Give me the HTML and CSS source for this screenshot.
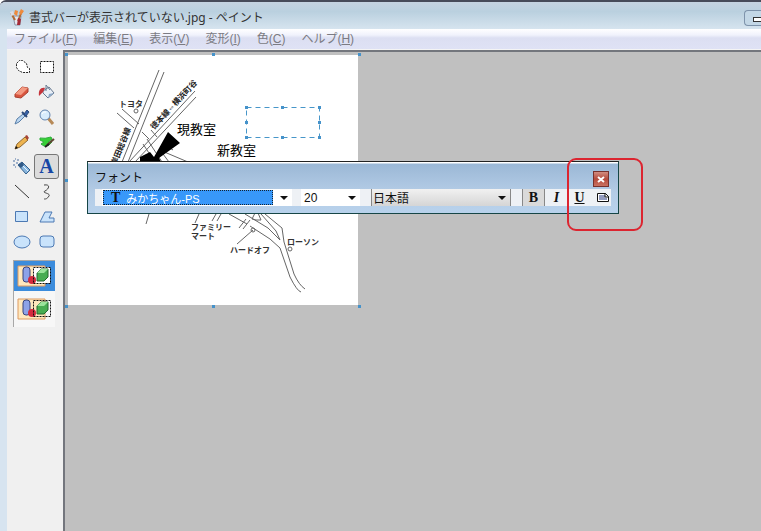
FILE: index.html
```html
<!DOCTYPE html>
<html lang="ja">
<head>
    <meta charset="UTF-8">
    <meta name="viewport" content="width=device-width, initial-scale=1.0">
    <title>書式バーが表示されていない.jpg - ペイント</title>
    <link rel="stylesheet" href="styles.css">
</head>
<body>
    <div class="window">
        <header class="titlebar">
            <svg class="app-icon" width="16" height="17" viewBox="0 0 16 17">
                <path d="M3 7h8l-1 9H5z" fill="#e4e8f0" stroke="#8b93a5"/>
                <path d="M1 4l4 7M12 2L8 12" stroke="#b06a35" stroke-width="2"/>
                <path d="M0 3l3-1 1 4-3 1z" fill="#d9dde5"/>
                <path d="M5 1l3 1-1 5-3-2zM11 0l3 2-3 4-2-2z" fill="#ee8a3c"/>
                <path d="M8 9l3 1-1 6H7z" fill="#a52c38"/>
            </svg>
            <h1>書式バーが表示されていない.jpg - ペイント</h1>
            <button class="minimize" aria-label="最小化"><span></span></button>
        </header>
        <nav class="menubar">
            <button>ファイル(<u>F</u>)</button>
            <button>編集(<u>E</u>)</button>
            <button>表示(<u>V</u>)</button>
            <button>変形(<u>I</u>)</button>
            <button>色(<u>C</u>)</button>
            <button>ヘルプ(<u>H</u>)</button>
        </nav>
        <div class="content">
            <aside class="toolbox">
                <div class="tools">
                    <button aria-label="自由選択"><svg width="18" height="18" viewBox="0 0 18 18"><path d="M3.500 5.500l3-3h3l4 3 1 4 2 1v4h-7l-4-2-2-3z" fill="#fff" stroke="#222" stroke-dasharray="2 1"/></svg></button>
                    <button aria-label="選択"><svg width="18" height="18" viewBox="0 0 18 18"><path d="M2.500 3.500h13v11h-13z" fill="#fff" stroke="#111" stroke-dasharray="2 1"/></svg></button>
                    <button aria-label="消しゴム"><svg width="18" height="18" viewBox="0 0 18 18"><path d="M2 11l7-7 6 1v4l-7 6-6-1z" fill="#d9553f" stroke="#a8402f"/><path d="M2 11l7-7 6 1-7 7z" fill="#f39a82"/></svg></button>
                    <button aria-label="塗りつぶし"><svg width="18" height="18" viewBox="0 0 18 18"><path d="M5 8l6-4 5 6-6 5-5-5z" fill="#e9eff7" stroke="#66788f"/><path d="M8 8V2l4 5" fill="none" stroke="#6b7d92"/><path d="M7 5C3 4 0 7 1 13l4-4z" fill="#c6343b"/><path d="M10 15l6-5-5 1z" fill="#8ba8c8"/></svg></button>
                    <button aria-label="色の選択"><svg width="18" height="18" viewBox="0 0 18 18"><path d="M2 16l2-5 6-5 2 2-6 6z" fill="#b9d5f0" stroke="#5a7fa8"/><path d="M9 4l5 5" stroke="#2c4a7a" stroke-width="2"/><path d="M11 6l3-4 2 2-3 4z" fill="#3862a8" stroke="#2c4a7a"/></svg></button>
                    <button aria-label="拡大と縮小"><svg width="18" height="18" viewBox="0 0 18 18"><path d="M10 10l5 6" stroke="#b78a58" stroke-width="3"/><circle cx="7" cy="7" r="5" fill="#d9ecfc" stroke="#6484ae"/><path d="M4 6q1-3 4-2" fill="none" stroke="#fff"/></svg></button>
                    <button aria-label="鉛筆"><svg width="18" height="18" viewBox="0 0 18 18"><path d="M2 16l2-5 8-7 3 3-8 7z" fill="#edb34f" stroke="#8f6933"/><path d="M2 16l1-3 2 2z" fill="#111"/><path d="M12 3l2-1 2 3-2 2z" fill="#a74436"/></svg></button>
                    <button aria-label="ブラシ"><svg width="18" height="18" viewBox="0 0 18 18"><path d="M2 5q5 1 11-1l1 2-4 3 4 0q-3 5-8 4l-3-2 3-2-4-2z" fill="#36cf36" stroke="#2fae3c"/><path d="M9 12l7-6" stroke="#5f4432" stroke-width="2"/><path d="M7 14l4-3" stroke="#222" stroke-width="2"/></svg></button>
                    <button aria-label="エアブラシ"><svg width="18" height="18" viewBox="0 0 18 18"><path d="M5 7l4-3 8 8-4 4z" fill="#8bb8df" stroke="#35618d"/><path d="M5 7l4-3 2 3-3 3z" fill="#315a87"/><path d="M0 3h2m1 2h2M0 7h2m2-5h2m-4-1h1M2 9h1" stroke="#4a6ea0"/><path d="M10 8l5 5" stroke="#e6f4ff"/></svg></button>
                    <button class="active letter" aria-label="テキスト">A</button>
                    <button aria-label="直線"><svg width="18" height="18" viewBox="0 0 18 18"><path d="M2 2l14 13" stroke="#333"/></svg></button>
                    <button aria-label="曲線"><svg width="18" height="18" viewBox="0 0 18 18"><path d="M6 2c7-1 5 4 1 6s6 2 4 5-3 3-5 3" fill="none" stroke="#444"/></svg></button>
                    <button aria-label="四角形"><svg width="18" height="18" viewBox="0 0 18 18"><path class="shape" d="M2.500 3.500h12v10h-12z"/></svg></button>
                    <button aria-label="多角形"><svg width="18" height="18" viewBox="0 0 18 18"><path class="shape" d="M2 14L7 4h7l-3 6h5v4z"/></svg></button>
                    <button aria-label="楕円"><svg width="18" height="18" viewBox="0 0 18 18"><ellipse class="shape" cx="9" cy="9" rx="8" ry="6"/></svg></button>
                    <button aria-label="角丸四角形"><svg width="18" height="18" viewBox="0 0 18 18"><rect class="shape" x="2" y="3" width="14" height="11" rx="3"/></svg></button>
                </div>
                <div class="options">
                    <button class="selected" aria-label="背景を透明にしない">
                        <svg width="36" height="24" viewBox="0 0 36 24"><path fill="#ffe8bd" stroke="#dd9a61" d="M1 2h27v20H1z"/><path fill="#fff" d="M16 3h17v16H16z"/><rect x="6" y="3" width="7" height="15" rx="3" fill="#8da2e8" stroke="#38447c"/><circle cx="15" cy="16" r="4" fill="#d42a3e"/><path d="M20 9l4-4h7v8l-4 4h-7z" fill="#48ad52" stroke="#25692e"/><path d="M20 9l4-4h7l-4 4z" fill="#9be49b"/><path fill="none" stroke="#111" stroke-dasharray="2 1" d="M16.500 3.500h17v16h-17z"/></svg>
                    </button>
                    <button aria-label="背景を透明にする">
                        <svg width="36" height="24" viewBox="0 0 36 24"><path fill="#ffe8bd" stroke="#dd9a61" d="M1 2h27v20H1z"/><rect x="6" y="3" width="7" height="15" rx="3" fill="#8da2e8" stroke="#38447c"/><circle cx="15" cy="16" r="4" fill="#d42a3e"/><path d="M20 9l4-4h7v8l-4 4h-7z" fill="#48ad52" stroke="#25692e"/><path d="M20 9l4-4h7l-4 4z" fill="#9be49b"/><path fill="none" stroke="#111" stroke-dasharray="2 1" d="M16.500 3.500h17v16h-17z"/></svg>
                    </button>
                </div>
            </aside>
            <main class="workspace">
                <!-- canvas with the map being edited -->
                <svg class="canvas" width="296" height="256" viewBox="0 0 296 256">
                    <path d="M3 3h290v250H3z" fill="#fff"/>
                    <g class="roads">
                        <path d="M94 18L57 110M99 20L63 110M64 110L130 39M70 110L131 45M52 61L69 76M57 57L74 72M77 80L84 87M82 87L97 110M78 92L86 104M86 78L92 85M98 102L104 110M97 99L123 110M102 94L108 98"/>
                        <path d="M84 162l-3 10M134 162l-4 9M151 162l-4 7M156 162l-4 7M164 162L182 172M185 174L205 187L215 196L225 225Q232 239 236 240M180 162L203 176L215 188L211 179L196 162M200 162L217 176L219 190L229 222Q234 233 240 237M174 176l7-9M178 177l7-9M188 178L172 192"/>
                        <path d="M166 161l3-5 4 5zm21 6l3-6 3 0 3 7-5 0z"/>
                        <circle cx="71" cy="59" r="2"/>
                        <circle cx="188" cy="178" r="2"/>
                        <circle cx="225" cy="197" r="2"/>
                    </g>
                    <path d="M103 80l12 11-21 15 2 4H75v-5l10-5 4 5z"/>
                    <g class="map-text">
                        <text x="54" y="55">トヨタ</text>
                        <text x="126" y="178">ファミリー</text>
                        <text x="126" y="187">マート</text>
                        <text x="165" y="201">ハードオフ</text>
                        <text x="222" y="193">ローソン</text>
                        <text class="street" transform="translate(89 78) rotate(-47)">徳本線⇔横浜町谷</text>
                        <text class="street" transform="translate(51 114) rotate(-68)">岸田総谷線</text>
                    </g>
                    <text class="room" x="112" y="82">現教室</text>
                    <text class="room" x="152" y="103">新教室</text>
                    <path class="selection" d="M181.500 55.500h73v30h-73z"/>
                    <path class="handle" d="M180 54h3v3h-3zm36 0h3v3h-3zm37 0h3v3h-3zM180 69h3v3h-3zm73 0h3v3h-3zM180 84h3v3h-3zm36 0h3v3h-3zm37 0h3v3h-3z"/>
                    <path class="handle" d="M0 1h3v3H0zm147 0h3v3h-3zm146 0h3v3h-3zM0 127h3v3H0zM0 253h3v3H0zm147 0h3v3h-3zm146 0h3v3h-3z"/>
                </svg>
                <section class="font-bar" aria-label="フォント">
                    <div class="font-title">
                        <h2>フォント</h2>
                        <button class="close" aria-label="閉じる"><svg width="8" height="7" viewBox="0 0 8 7"><path d="M1 1l6 5M7 1L1 6" stroke="#fff" stroke-width="2"/></svg></button>
                    </div>
                    <div class="font-tools">
                        <button class="combo font-name"><span class="name"><b>T</b>みかちゃん-PS</span><i class="arrow"></i></button>
                        <button class="combo font-size">20<i class="arrow"></i></button>
                        <button class="combo font-lang">日本語<i class="arrow"></i></button>
                        <div class="styles">
                            <button class="pressed"><b>B</b></button>
                            <button><em>I</em></button>
                            <button><u>U</u></button>
                            <button aria-label="縦書き"><svg width="14" height="11" viewBox="0 0 14 11"><path d="M1.500 1.500h8l3 3v5h-11z" fill="#fff" stroke="#111"/><path d="M4 3v5M6 3v5M8 3v5M10 6v2" stroke="#26367e"/><path d="M9 1v4h4" fill="none" stroke="#111"/></svg></button>
                        </div>
                    </div>
                </section>
                <div class="marker"></div>
            </main>
        </div>
    </div>
</body>
</html>
```

FILE: styles.css
```css
* {
    box-sizing: border-box;
}
body {
    margin: 0;
    font-family: "Liberation Sans", "Noto Sans CJK JP", sans-serif;
    font-size: 12px;
    color: #111;
}
button {
    padding: 0;
    border: none;
    background: none;
    font: inherit;
    color: inherit;
}
h1, h2 {
    margin: 0;
    font-weight: normal;
}
.window {
    display: flex;
    flex-direction: column;
    min-height: 100vh;
    border-top: 2px solid #474a59;
    border-radius: 6px 0 0 0;
    background: #d7e4f0;
    overflow: hidden;
}
.titlebar {
    display: flex;
    align-items: center;
    height: 27px;
    padding: 4px 0 0 10px;
    background: linear-gradient(#c5d2e0, #bad0df 35%, #d6e4ef);
}
.titlebar h1 {
    flex: 1;
    margin-left: 3px;
    font-family: "Noto Sans", "Noto Sans CJK JP", sans-serif;
    font-size: 12px;
    line-height: 20px;
    color: #333;
}
.minimize {
    width: 17px;
    height: 16px;
    padding: 0 0 0 8px;
    border: 1px solid #7e93ab;
    border-right: none;
    border-radius: 4px 0 0 4px;
    background: #c3d7e6;
}
.minimize span {
    display: block;
    width: 9px;
    height: 5px;
    margin-top: 4px;
    border: 1px solid #333;
    border-right: none;
    background: #fff;
}
.menubar {
    display: flex;
    gap: 16px;
    height: 20px;
    margin-left: 7px;
    padding-left: 7px;
    background: linear-gradient(#fff, #f0f2fc 30%, #dcdff2 45%, #dfe2f5);
    color: #7b7b83;
    line-height: 20px;
    white-space: nowrap;
}
.content {
    display: flex;
    flex: 1;
    margin-left: 7px;
    border-top: 1px solid #f4f4f4;
}
.toolbox {
    flex: none;
    width: 56px;
    padding: 4px 2px 0 2px;
    background: #f0f0f0;
}
.tools {
    display: grid;
    grid-template-columns: 25px 25px;
    grid-auto-rows: 25px;
}
.tools button {
    display: flex;
    align-items: center;
    justify-content: center;
}
.tools .active {
    border: 1px solid #777;
    border-radius: 3px;
    background: #dcdcdc;
}
.tools .letter {
    font-family: "Liberation Serif", serif;
    font-size: 20px;
    font-weight: bold;
    color: #1746a5;
}
.shape {
    fill: #c9e3fb;
    stroke: #4c79b3;
}
.options {
    width: 42px;
    margin: 6px 0 0 4px;
    border: 1px solid #a8a8a8;
    border-width: 1px 0 0 1px;
    background: #f7f7f7;
}
.options button {
    display: flex;
    align-items: center;
    justify-content: center;
    width: 100%;
    height: 36px;
}
.options .selected {
    height: 30px;
    background: #3c8cdc;
}
.workspace {
    position: relative;
    flex: 1;
    min-width: 0;
    border: 2px solid #73767d;
    border-right: none;
    border-bottom: none;
    background: #c0c0c0;
}
.canvas {
    display: block;
}
.roads {
    fill: none;
    stroke: #666;
}
.map-text {
    font-size: 8px;
    font-weight: bold;
    fill: #333;
}
.street {
    fill: #222;
}
.room {
    font-size: 13px;
}
.selection {
    fill: none;
    stroke: #4796c9;
    stroke-dasharray: 5 4;
}
.handle {
    fill: #4592ca;
}
/* floating font palette */
.font-bar {
    position: absolute;
    top: 109px;
    left: 22px;
    width: 532px;
    padding: 0 7px 7px;
    border: 1px solid #164646;
    border-top-color: #222;
    background: linear-gradient(#fff 1px, #9bb8d6 2px, #b4cce6 60%, #b8d2ec);
}
.font-title {
    display: flex;
    align-items: flex-end;
    justify-content: space-between;
    height: 27px;
    padding-right: 2px;
}
.font-title h2 {
    font-size: 12px;
    line-height: 22px;
}
.close {
    display: flex;
    align-items: center;
    justify-content: center;
    width: 16px;
    height: 16px;
    margin-bottom: 2px;
    border: 1px solid #77312c;
    background: linear-gradient(#d28c80, #b54a3b 50%, #c97161);
}
.font-tools {
    display: flex;
    height: 17px;
    background: #eef1f5;
}
.combo {
    display: flex;
    flex: none;
    align-items: center;
    justify-content: space-between;
    height: 17px;
    padding: 0 4px 0 3px;
    background: #fff;
}
.arrow {
    border: 4px solid transparent;
    border-top-color: #111;
    border-bottom: none;
}
.font-name {
    width: 190px;
    margin-left: 7px;
    padding-left: 1px;
}
.name {
    display: flex;
    align-items: center;
    gap: 6px;
    width: 170px;
    height: 15px;
    padding-left: 7px;
    border: 1px dotted #123;
    background: #3898fa;
    color: #fff;
    font-size: 11px;
}
.name b {
    font-family: "Liberation Serif", serif;
    font-size: 14px;
    color: #111;
}
.font-size {
    width: 59px;
    margin-left: 9px;
}
.font-lang {
    width: 140px;
    margin-left: 11px;
    border: 1px solid #888;
    border-width: 0 1px;
    background: linear-gradient(#f1f1f1, #d5d5d5);
    padding-left: 1px;
}
.styles {
    display: flex;
    flex: none;
    margin-left: 11px;
    font-family: "Liberation Serif", serif;
    font-size: 14px;
    font-weight: bold;
}
.styles button {
    display: flex;
    align-items: center;
    justify-content: center;
    width: 23px;
    line-height: 17px;
}
.styles .pressed {
    border: 1px solid #888;
    border-width: 0 1px;
    background: #dadada;
}
.marker {
    position: absolute;
    top: 106px;
    left: 502px;
    width: 76px;
    height: 73px;
    border: 2px solid #dc2530;
    border-radius: 9px;
}
```
